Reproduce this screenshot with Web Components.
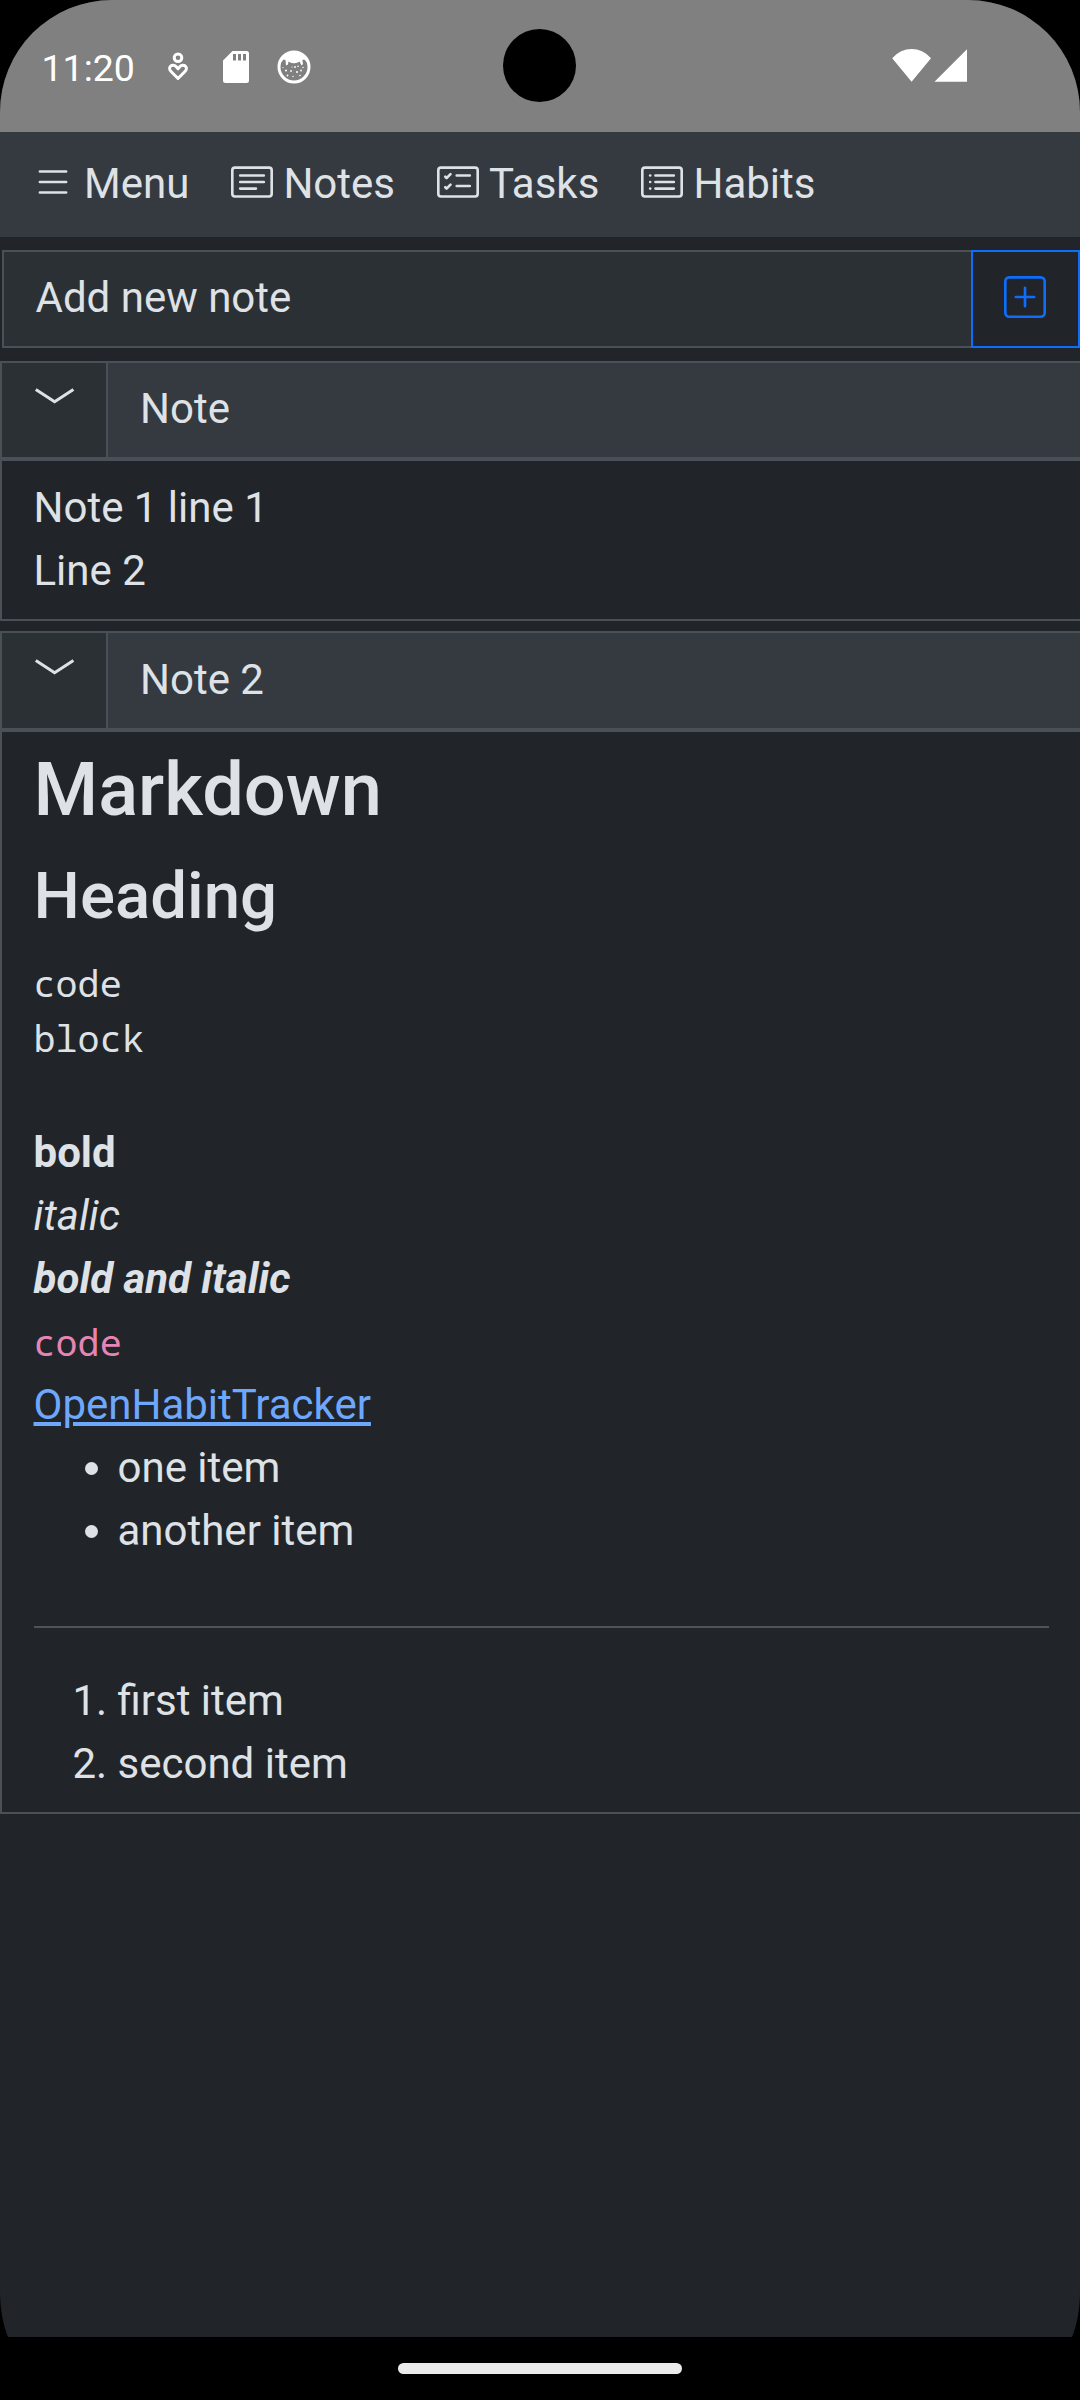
<!DOCTYPE html>
<html lang="en">
<head>
<meta charset="utf-8">
<title>Notes</title>
<style>
html,body{margin:0;background:#000}
body{width:1080px;height:2400px;overflow:hidden;font-family:Roboto,sans-serif;font-size:42px;line-height:63px;color:#dee2e6}
</style>
</head>
<body>
<phone-screen>
  <status-bar slot="status" time="11:20"></status-bar>
  <nav-bar>
    <nav-item icon="list">Menu</nav-item>
    <nav-item icon="text">Notes</nav-item>
    <nav-item icon="checklist">Tasks</nav-item>
    <nav-item icon="bullets">Habits</nav-item>
  </nav-bar>
  <add-note placeholder="Add new note"></add-note>
  <note-card style="--head:94px;height:260px">
    <span slot="title">Note</span>
    <note-text>Note 1 line 1<br>Line 2</note-text>
  </note-card>
  <note-card style="--head:95px;--nudge:1px;height:1183px;margin-top:10px">
    <span slot="title">Note 2</span>
    <markdown-demo></markdown-demo>
  </note-card>
  <home-bar slot="home"></home-bar>
</phone-screen>
<script>
function define(name, html, setup){
  customElements.define(name, class extends HTMLElement{
    constructor(){ super(); this.attachShadow({mode:'open'}); }
    connectedCallback(){ this.shadowRoot.innerHTML = html; if(setup) setup(this, this.shadowRoot); }
  });
}
const FRAME = '<path d="M14.5 3a.5.5 0 0 1 .5.5v9a.5.5 0 0 1-.5.5h-13a.5.5 0 0 1-.5-.5v-9a.5.5 0 0 1 .5-.5zm-13-1A1.5 1.5 0 0 0 0 3.5v9A1.5 1.5 0 0 0 1.5 14h13a1.5 1.5 0 0 0 1.5-1.5v-9A1.5 1.5 0 0 0 14.5 2z"/>';
const ICONS = {
  list:'<path fill-rule="evenodd" d="M2.5 12a.5.5 0 0 1 .5-.5h10a.5.5 0 0 1 0 1H3a.5.5 0 0 1-.5-.5m0-4a.5.5 0 0 1 .5-.5h10a.5.5 0 0 1 0 1H3a.5.5 0 0 1-.5-.5m0-4a.5.5 0 0 1 .5-.5h10a.5.5 0 0 1 0 1H3a.5.5 0 0 1-.5-.5"/>',
  text:FRAME+'<path d="M3 5.5a.5.5 0 0 1 .5-.5h9a.5.5 0 0 1 0 1h-9a.5.5 0 0 1-.5-.5M3 8a.5.5 0 0 1 .5-.5h9a.5.5 0 0 1 0 1h-9A.5.5 0 0 1 3 8m0 2.5a.5.5 0 0 1 .5-.5h6a.5.5 0 0 1 0 1h-6a.5.5 0 0 1-.5-.5"/>',
  checklist:FRAME+'<path d="M7 5.5a.5.5 0 0 1 .5-.5h5a.5.5 0 0 1 0 1h-5a.5.5 0 0 1-.5-.5m-1.496-.854a.5.5 0 0 1 0 .708l-1.5 1.5a.5.5 0 0 1-.708 0l-.5-.5a.5.5 0 1 1 .708-.708l.146.147 1.146-1.147a.5.5 0 0 1 .708 0M7 9.5a.5.5 0 0 1 .5-.5h5a.5.5 0 0 1 0 1h-5a.5.5 0 0 1-.5-.5m-1.496-.854a.5.5 0 0 1 0 .708l-1.5 1.5a.5.5 0 0 1-.708 0l-.5-.5a.5.5 0 0 1 .708-.708l.146.147 1.146-1.147a.5.5 0 0 1 .708 0"/>',
  bullets:FRAME+'<path d="M5 8a.5.5 0 0 1 .5-.5h7a.5.5 0 0 1 0 1h-7A.5.5 0 0 1 5 8m0-2.500a.5.5 0 0 1 .5-.5h7a.5.5 0 0 1 0 1h-7a.5.5 0 0 1-.5-.5m0 5a.5.5 0 0 1 .5-.5h7a.5.5 0 0 1 0 1h-7a.5.5 0 0 1-.5-.5"/><circle cx="3.5" cy="5.5" r=".5"/><circle cx="3.5" cy="8" r=".5"/><circle cx="3.5" cy="10.5" r=".5"/>',
  plus:'<path d="M14 1a1 1 0 0 1 1 1v12a1 1 0 0 1-1 1H2a1 1 0 0 1-1-1V2a1 1 0 0 1 1-1zM2 0a2 2 0 0 0-2 2v12a2 2 0 0 0 2 2h12a2 2 0 0 0 2-2V2a2 2 0 0 0-2-2z"/><path d="M8 4a.5.5 0 0 1 .5.5v3h3a.5.5 0 0 1 0 1h-3v3a.5.5 0 0 1-1 0v-3h-3a.5.5 0 0 1 0-1h3v-3A.5.5 0 0 1 8 4"/>'
};
define('ui-icon','<style>:host{display:block;width:42px;height:42px;flex:none}svg{display:block}</style><svg width="42" height="42" viewBox="0 0 16 16" fill="currentColor"></svg>',
  (el,root)=>{ root.querySelector('svg').innerHTML = ICONS[el.getAttribute('name')]; });

define('phone-screen',`<style>
:host{display:flex;flex-direction:column;width:1080px;height:2400px;background:#000}
.view{height:2337px;box-sizing:border-box;overflow:hidden;background:#212529;border-radius:112px 112px 0 0;display:flex;flex-direction:column;
clip-path:path('M0 0H1080V2290C1080 2309 1077 2325 1072 2337H8C3 2325 0 2309 0 2290Z')}
</style><div class="view"><slot name="status"></slot><slot></slot></div><slot name="home"></slot>`);

define('status-bar',`<style>
:host{display:block;position:relative;height:132px;flex:none;background:#808080;color:#fff}
.row{display:flex;align-items:center;height:100%;box-sizing:border-box;padding:0 113px 0 41.500px}
.time{font-size:37.500px;line-height:44px;width:126.500px;padding-top:3px}
svg{display:block;flex:none}
.cam{position:absolute;left:503px;top:29px;width:73px;height:73px;border-radius:50%;background:#000}
.right{margin-left:auto}
</style><div class="row"><span class="time"></span>
<svg width="128" height="40" viewBox="168 46 128 40" style="overflow:visible">
 <g fill="none" stroke="#fff" stroke-width="3"><circle cx="178" cy="57.700" r="3.800"/>
 <path d="M178 78.500L171.300 71.800C169.400 69.900 169 67.700 170.500 66.200C172 64.700 174.500 64.800 176 66.500L178 68.800L180 66.500C181.500 64.800 184 64.700 185.500 66.200C187 67.700 186.600 69.900 184.700 71.800Z" stroke-linejoin="round"/></g>
 <path fill="#fff" fill-rule="evenodd" d="M232.500 51H246.500Q249 51 249 53.500V80.500Q249 83 246.500 83H225.500Q223 83 223 80.500V60.500ZM233 54V60.500H236V54ZM238 54V60.500H241V54ZM243 54V60.500H246V54Z"/>
 <circle cx="294" cy="67" r="15" fill="none" stroke="#fff" stroke-width="3"/>
 <path fill="#fff" d="M283 56Q294 47 305 56L307.500 63L304.300 59.500L302.300 60L303 64L301.500 65.500L299.500 61.500Q297 63.500 294 63.200Q291 63.500 288.500 61.500L288 64.500L286 65.500L285.500 60L283.700 59.500L280.500 63Z"/>
 <g fill="#fff"><circle cx="286" cy="70.500" r="1"/><circle cx="287.500" cy="75.500" r=".9"/><circle cx="291" cy="71" r=".9"/><circle cx="292" cy="67" r=".6"/><circle cx="295" cy="67" r=".9"/><circle cx="298" cy="66.300" r=".8"/><circle cx="297" cy="72" r="1"/><circle cx="301" cy="70.500" r=".9"/><circle cx="300" cy="75.500" r=".8"/><circle cx="303" cy="67.500" r=".7"/><circle cx="293" cy="76.500" r=".7"/><circle cx="283" cy="67.500" r=".6"/></g>
</svg>
<svg class="right" width="75" height="34" viewBox="892 49 75 34"><path fill="#fff" d="M911.600 81.700L892.200 58.200Q900.500 49.100 911.600 49.100Q922.700 49.100 931 58.200ZM967 49.300V81.700H934.500Z"/></svg>
</div><div class="cam"></div>`,(el,root)=>{root.querySelector('.time').textContent=el.getAttribute('time');});

define('nav-bar','<style>:host{display:flex;align-items:center;gap:41.600px;height:105px;flex:none;box-sizing:border-box;padding:0 31.500px 5px;background:#343a40}</style><slot></slot>');
define('nav-item','<style>:host{display:flex;align-items:center;gap:10.500px;white-space:nowrap}span{padding-top:3px}</style><div></div><span><slot></slot></span>',
  (el,root)=>{ root.querySelector('div').innerHTML = `<ui-icon name="${el.getAttribute('icon')}"></ui-icon>`; });

define('add-note',`<style>
:host{display:flex;height:98px;margin:13px 0;padding-left:2px;flex:none}
.field{flex:1;box-sizing:border-box;border:2px solid #495057;border-right:0;background:#2b3035;padding:14px 31.500px}
.btn{width:109px;box-sizing:border-box;border:2px solid #0d6efd;color:#0d6efd;display:flex;align-items:center;justify-content:center;padding:0 1px 4px 0}
</style><div class="field"></div><div class="btn"><ui-icon name="plus"></ui-icon></div>`,(el,root)=>{root.querySelector('.field').textContent=el.getAttribute('placeholder');});

define('note-card',`<style>
:host{display:flex;flex-direction:column;flex:none;box-sizing:border-box;border:2px solid #495057;border-right:0}
.head{display:flex;height:var(--head);border-bottom:4px solid #495057;background:#343a40;flex:none}
.toggle{width:104px;border-right:2px solid #495057;background:#2b3035}
.toggle svg{display:block;margin:calc(24px + var(--nudge,0px)) 0 0 32px}
.title{padding:calc(14px + var(--nudge,0px)) 31px 0 32px}
.body{padding:15px 31px 0 31.500px}
</style><div class="head"><div class="toggle"><svg width="42" height="18" viewBox="0 0 42 18"><path d="M1.800 2.500L20.600 14.800L39.400 2.500" fill="none" stroke="#dee2e6" stroke-width="3"/></svg></div><div class="title"><slot name="title"></slot></div></div><div class="body"><slot></slot></div>`);
define('note-text','<style>:host{display:block}</style><slot></slot>');

define('markdown-demo',`<style>
:host{display:block}
h1,h2{margin:0 0 21px;font-weight:500;line-height:1.2}
h1{font-size:74px;line-height:88.680px;margin:-1px 0 22px}h2{font-size:65.400px}
pre{margin:0 0 55px;font-size:36.750px;line-height:55.120px}
pre,code{font-family:"Noto Sans Mono","Droid Sans Mono","DejaVu Sans Mono",monospace}
p{margin:0}
code{font-size:36.750px;color:#e685b5}
.l{height:63px}
a{color:#6ea8fe;text-decoration:underline}
ul,ol{margin:0;padding-left:84px}
hr{margin:64px 0 41px;border:0;border-top:2px solid #505458}
</style><h1>Markdown</h1><h2>Heading</h2><pre>code
block</pre><p class="l"><b>bold</b></p><p class="l"><i>italic</i></p><p class="l"><b><i>bold and italic</i></b></p><p class="l"><code>code</code></p><p class="l"><a>OpenHabitTracker</a></p>
<ul><li>one item</li><li>another item</li></ul><hr><ol><li>first item</li><li>second item</li></ol>`);
define('home-bar','<style>:host{display:flex;justify-content:center;height:63px;padding-top:26px;box-sizing:border-box;background:#000}div{width:284px;height:11px;border-radius:5.500px;background:#ebebeb}</style><div></div>');
</script>
</body>
</html>
